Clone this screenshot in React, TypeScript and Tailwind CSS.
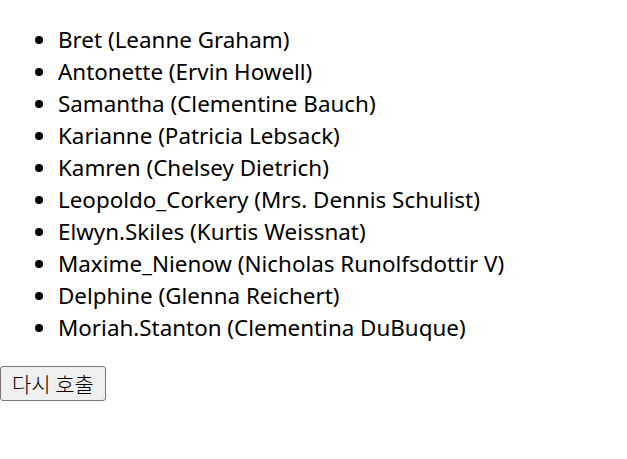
import React from 'react';

const users = [
  { username: 'Bret', name: 'Leanne Graham' },
  { username: 'Antonette', name: 'Ervin Howell' },
  { username: 'Samantha', name: 'Clementine Bauch' },
  { username: 'Karianne', name: 'Patricia Lebsack' },
  { username: 'Kamren', name: 'Chelsey Dietrich' },
  { username: 'Leopoldo_Corkery', name: 'Mrs. Dennis Schulist' },
  { username: 'Elwyn.Skiles', name: 'Kurtis Weissnat' },
  { username: 'Maxime_Nienow', name: 'Nicholas Runolfsdottir V' },
  { username: 'Delphine', name: 'Glenna Reichert' },
  { username: 'Moriah.Stanton', name: 'Clementina DuBuque' },
];

export default function App() {
  return (
    <div className="bg-white text-black min-h-[459px] font-['Noto_Sans','Noto_Sans_CJK_KR',sans-serif]">
      <ul className="list-disc pl-[58px] pt-[24px] mb-[22px] text-[22.4px] leading-[32px]">
        {users.map((u) => (
          <li key={u.username} className="pl-0">
            {u.username} ({u.name})
          </li>
        ))}
      </ul>
      <button className="h-[35px] px-[11px] text-[21px] bg-[#efefef] border border-[#767676] rounded-[3px] font-['Noto_Sans_CJK_KR',sans-serif] font-light leading-none">
        다시 호출
      </button>
    </div>
  );
}
